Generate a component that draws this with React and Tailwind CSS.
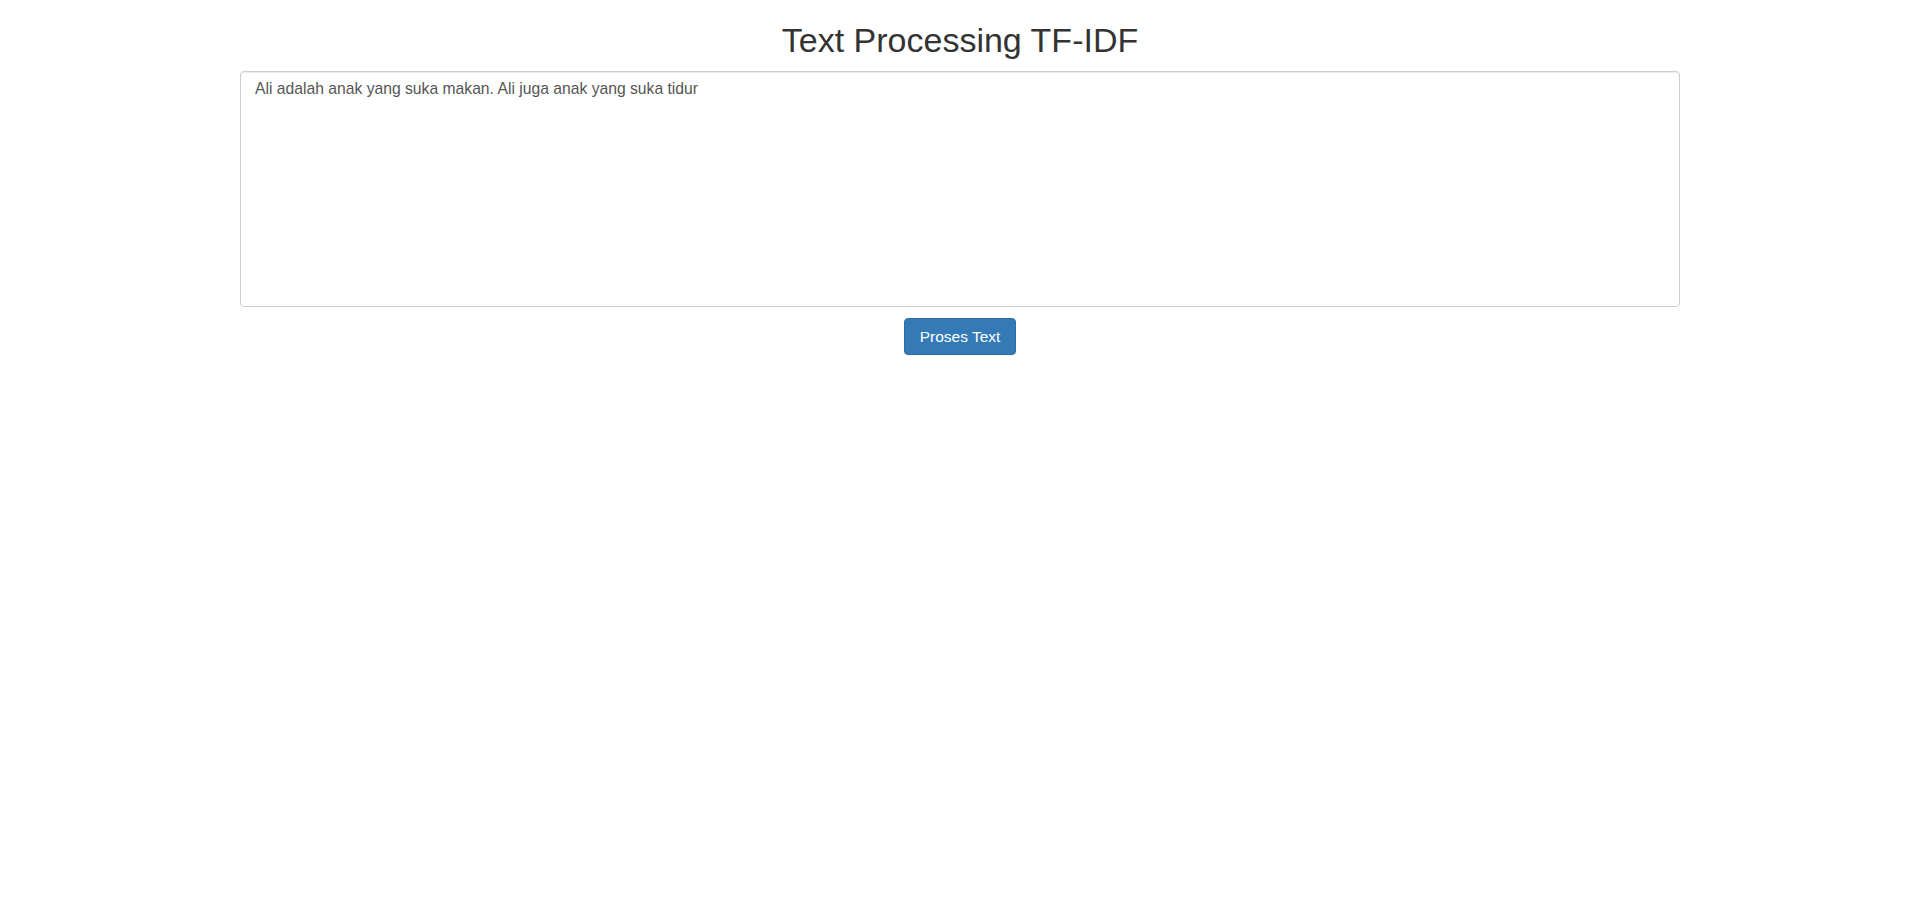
import React, { useState } from 'react';

const App = () => {
  const [text, setText] = useState('Ali adalah anak yang suka makan. Ali juga anak yang suka tidur');

  return (
    <div className="min-h-screen bg-white text-[#333] font-['Liberation_Sans',Arial,sans-serif]">
      <div className="w-3/4 mx-auto">
        <h1 className="mt-[21px] mb-[11px] text-center text-[34px] leading-[39px] font-normal">
          Text Processing TF-IDF
        </h1>
        <textarea
          value={text}
          onChange={(e) => setText(e.target.value)}
          className="block w-full h-[236px] px-[14px] py-[6px] text-[15.7px] leading-[22px] text-[#555] bg-white border border-[#ccc] rounded-[4px] shadow-[inset_0_1px_1px_rgba(0,0,0,0.075)] resize-none outline-none"
        />
        <div className="flex justify-center mt-[11px]">
          <button className="h-[37px] px-[15px] text-[15.5px] text-white bg-[#337ab7] border border-[#2e6da4] rounded-[4px]">
            Proses Text
          </button>
        </div>
      </div>
    </div>
  );
};

export default App;
